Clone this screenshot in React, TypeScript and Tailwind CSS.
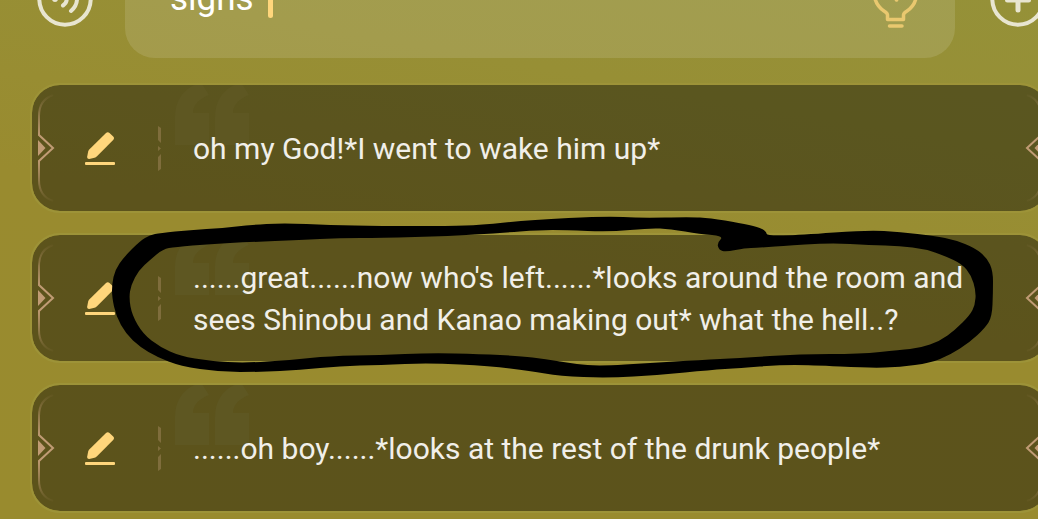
import { useState } from "react";

type Point = [number, number];

const REPLIES = [
  "oh my God!*I went to wake him up*",
  "......great......now who's left......*looks around the room and sees Shinobu and Kanao making out* what the hell..?",
  "......oh boy......*looks at the rest of the drunk people*",
];

// outer and inner edge of the marker loop
const OUTER: Point[] = [
  [160, 233], [190, 230], [223, 228], [250, 225], [283, 223], [330, 225], [380, 226], [450, 226],
  [480, 225], [530, 220], [607, 216], [640, 218], [690, 217], [710, 218], [740, 223], [758, 227],
  [766, 231], [767, 236], [800, 235], [868, 230], [900, 232], [935, 236], [955, 240], [975, 248],
  [987, 258], [993, 271], [993, 292], [992, 317], [985, 328], [970, 342], [950, 355], [930, 363],
  [900, 367], [870, 368], [810, 365], [780, 365], [740, 368], [710, 370], [660, 375], [607, 378],
  [560, 376], [530, 371], [490, 366], [430, 363], [380, 365], [340, 366], [300, 370], [260, 372],
  [220, 372], [180, 366], [157, 357], [140, 347], [126, 334], [116, 316], [112, 297], [112, 284],
  [115, 270], [124, 257], [140, 241], [150, 235],
];

const INNER: Point[] = [
  [163, 249], [175, 247], [210, 244], [250, 242], [300, 240], [340, 238], [380, 238], [450, 236],
  [500, 233], [540, 230], [565, 230], [610, 232], [650, 228], [670, 229], [700, 234], [724, 236],
  [717, 243], [719, 250], [726, 252], [745, 248], [757, 248], [780, 246], [830, 243], [870, 245],
  [900, 246], [925, 249], [945, 256], [962, 264], [971, 275], [976, 291], [975, 305], [970, 315],
  [955, 330], [940, 341], [920, 348], [900, 350], [860, 354], [800, 354], [740, 358], [700, 360],
  [650, 363], [600, 366], [575, 364], [545, 359], [520, 356], [480, 354], [430, 353], [380, 355],
  [330, 356], [290, 360], [245, 363], [210, 361], [180, 356], [160, 347], [143, 334], [132, 315],
  [129, 298], [131, 285], [139, 270], [150, 260],
];

function smooth(points: Point[]) {
  const mid = (a: Point, b: Point) => `${(a[0] + b[0]) / 2} ${(a[1] + b[1]) / 2}`;
  const last = points[points.length - 1];
  const curves = points.map((p, i) => `Q${p[0]} ${p[1]} ${mid(p, points[(i + 1) % points.length])}`);
  return `M${mid(last, points[0])}${curves.join("")}Z`;
}

function VoiceIcon() {
  return (
    <svg width="56" height="56" viewBox="0 0 56 56" fill="none" stroke="currentColor" strokeWidth="4" strokeLinecap="round" aria-hidden>
      <circle cx="28" cy="28" r="25.7" />
      <circle cx="18" cy="28" r="1" />
      <path d="M26 34.5C31 31 31 25 26 21.5M34 40C42 33 42 23 34 16" />
    </svg>
  );
}

function PlusIcon() {
  return (
    <svg width="56" height="56" viewBox="0 0 56 56" fill="none" stroke="currentColor" strokeWidth="4" strokeLinecap="round" aria-hidden>
      <circle cx="28" cy="28" r="25.7" />
      <path d="M17.5 29H38.5M28 18V39" strokeWidth="5" />
    </svg>
  );
}

function BulbIcon() {
  return (
    <svg width="48" height="60" viewBox="0 0 48 60" fill="none" stroke="currentColor" strokeWidth="3.5" strokeLinecap="round" strokeLinejoin="round" aria-hidden>
      <path d="M32.5 50.5H16.5V46C16.500 44 15.500 43.500 13 42C7 38 3.500 31 3 24A21 21 0 0 1 45.500 24C45.500 31 42 38 36 42C33.500 43.500 32.5 44 32.5 46Z" />
      <path d="M18.5 57H31M26 19L21 27H28L25.5 31" />
    </svg>
  );
}

function PencilIcon() {
  return (
    <svg width="30" height="33" viewBox="0 0 30 33" fill="currentColor" aria-hidden>
      <path d="M2.2 24.5L3.2 19.5Q3.5 18.3 4.5 17.3L21 .9Q22.8 -.6 24.5 .9L28.2 4.6Q29.8 6.3 28.2 8L12 24.2Q10.5 25.6 8.5 26.1L4.2 26.9Q1.8 27 2.2 24.5Z" />
      <rect y="30" width="30" height="3" rx="1" />
    </svg>
  );
}

function Divider() {
  return (
    <svg width="3" height="45" viewBox="0 0 3 45" fill="#7f6d3c" className="shrink-0" aria-hidden>
      <path d="M0 0L3 2V17L0 14ZM0 20L3 22.5L0 25ZM3 28V43L0 45V31Z" />
    </svg>
  );
}

function QuoteMark() {
  return (
    <svg width="76" height="60" viewBox="0 0 76 60" fill="#5e5722" className="absolute top-0 left-[143px]" aria-hidden>
      <path d="M0 60V32C0 16 8 4 22 -1H27L34 10C24 14 18 20 18 28H34V60Z" />
      <path d="M40 60V32C40 16 48 4 62 -1H67L74 10C64 14 58 20 58 28H74V60Z" />
    </svg>
  );
}

function Bracket({ id, className }: { id: string; className: string }) {
  return (
    <svg width="24" height="126" viewBox="0 0 24 126" fill="none" className={className} aria-hidden>
      <defs>
        <linearGradient id={id} x1="0" y1="8" x2="0" y2="118" gradientUnits="userSpaceOnUse">
          <stop offset="0" stopColor="#c09b74" stopOpacity="0" />
          <stop offset=".4" stopColor="#c09b74" />
          <stop offset=".6" stopColor="#c09b74" />
          <stop offset="1" stopColor="#c09b74" stopOpacity="0" />
        </linearGradient>
      </defs>
      <path d="M21 10C12 13 7 20 7 31V50L21 63L7 76V95C7 106 12 113 21 116" stroke={`url(#${id})`} strokeWidth="2" />
      <path d="M6 55L13.5 63L6 71Z" fill="#c09b74" />
    </svg>
  );
}

function ReplyCard({ text, index }: { text: string; index: number }) {
  return (
    <li className="relative flex min-h-[130px] items-center rounded-[30px] border-2 border-[#9d9338] bg-black/40 bg-clip-padding pr-[70px] pl-[53px]">
      <QuoteMark />
      <Bracket id={`left-${index}`} className="absolute top-0 left-0" />
      <Bracket id={`right-${index}`} className="absolute top-0 right-0 -scale-x-100" />
      <button type="button" aria-label="Edit reply" className="mr-[43px] shrink-0 text-[#ffd67c]">
        <PencilIcon />
      </button>
      <Divider />
      <p className="relative ml-8 flex-1 pt-0.5 text-[30px] leading-[42px] text-[#f1efe9]">{text}</p>
    </li>
  );
}

export default function App() {
  const [draft, setDraft] = useState("signs");

  return (
    <main className="relative min-h-screen overflow-hidden bg-[#998a2e] bg-[linear-gradient(190deg,#959138_0%,#978f35_22%,#998b2f_50%,#998b2e_100%)] font-['Roboto',sans-serif]">
      <header className="-mt-[60px] -mr-2 ml-[37px] flex items-center">
        <button type="button" aria-label="Voice" className="shrink-0 text-[#e8e5d0]">
          <VoiceIcon />
        </button>
        <div className="mr-[35px] ml-8 flex h-[118px] flex-1 items-center rounded-[30px] bg-white/12 pr-9 pl-[45px]">
          <input
            aria-label="Message"
            value={draft}
            onChange={(e) => setDraft(e.target.value)}
            className="field-sizing-content text-[35px] leading-[42px] text-white caret-transparent outline-none"
          />
          <span className="ml-3.5 h-[38px] w-[5px] rounded-full bg-[#ffd67c]" />
          <button type="button" aria-label="Ideas" className="ml-auto text-[#e9c86f]">
            <BulbIcon />
          </button>
        </div>
        <button type="button" aria-label="Add" className="shrink-0 text-[#e8e5d0]">
          <PlusIcon />
        </button>
      </header>
      <ul className="mt-[25px] -mr-3 ml-[30px] flex flex-col gap-5">
        {REPLIES.map((text, i) => (
          <ReplyCard key={text} text={text} index={i} />
        ))}
      </ul>
      <svg width="1038" height="519" viewBox="0 0 1038 519" className="pointer-events-none absolute top-0 left-0" aria-hidden>
        <path d={smooth(OUTER) + smooth(INNER)} fillRule="evenodd" />
      </svg>
    </main>
  );
}
